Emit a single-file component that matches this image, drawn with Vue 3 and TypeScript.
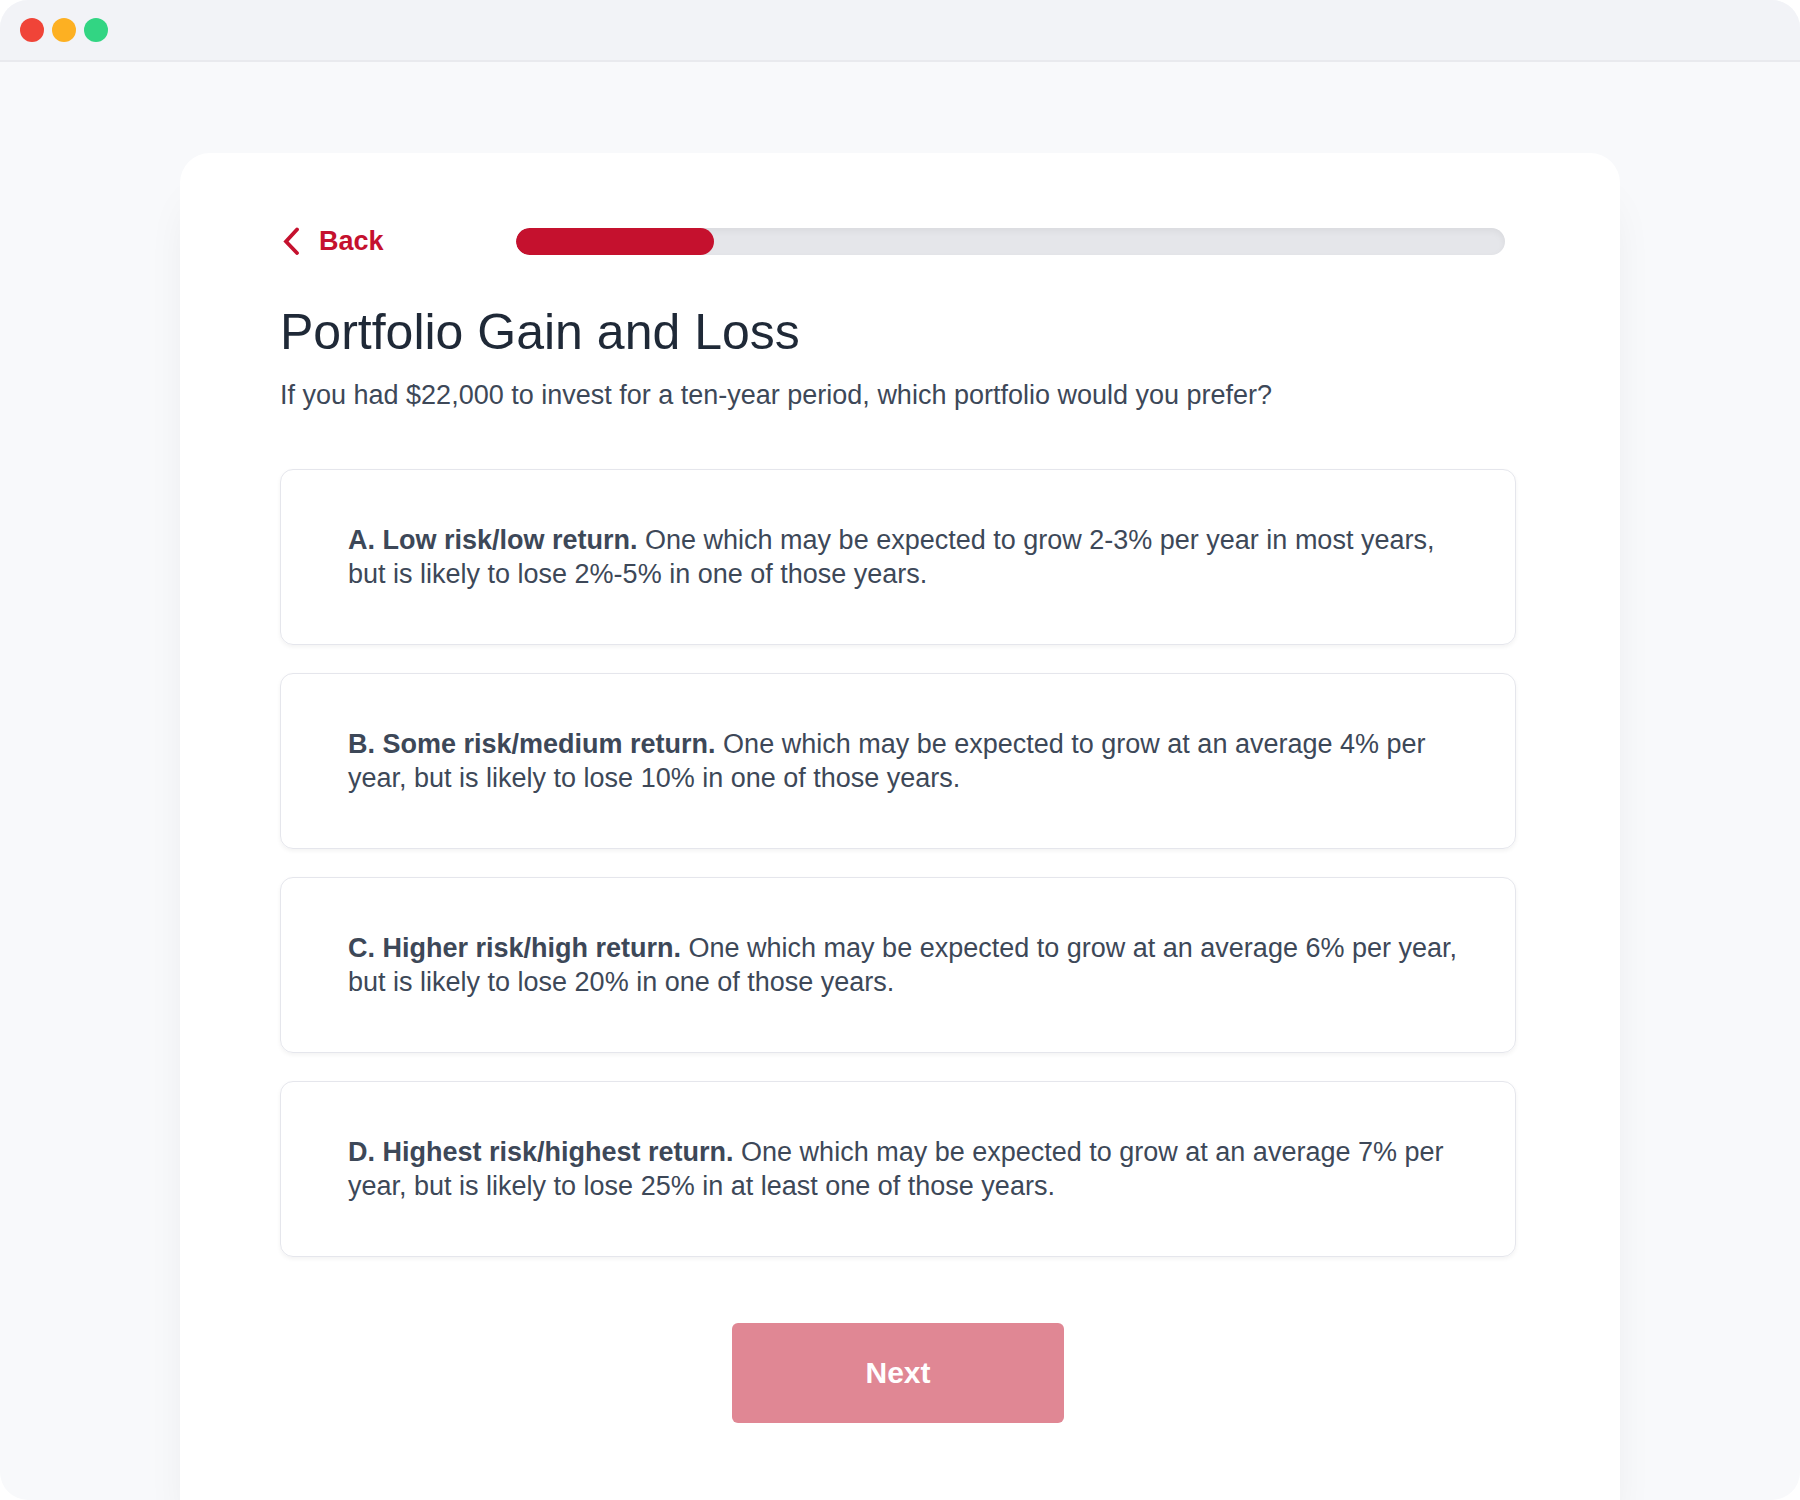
<script setup lang="ts">
import { ref } from 'vue'

interface Option {
  id: string
  title: string
  text: string
}

const progress = ref<number>(20)
const selected = ref<string>('')

const options: Option[] = [
  {
    id: 'a',
    title: 'A. Low risk/low return.',
    text: 'One which may be expected to grow 2-3% per year in most years, but is likely to lose 2%-5% in one of those years.',
  },
  {
    id: 'b',
    title: 'B. Some risk/medium return.',
    text: 'One which may be expected to grow at an average 4% per year, but is likely to lose 10% in one of those years.',
  },
  {
    id: 'c',
    title: 'C. Higher risk/high return.',
    text: 'One which may be expected to grow at an average 6% per year, but is likely to lose 20% in one of those years.',
  },
  {
    id: 'd',
    title: 'D. Highest risk/highest return.',
    text: 'One which may be expected to grow at an average 7% per year, but is likely to lose 25% in at least one of those years.',
  },
]
</script>

<template>
  <div class="window">
    <header class="titlebar">
      <span class="dot dot-close"></span>
      <span class="dot dot-minimise"></span>
      <span class="dot dot-zoom"></span>
    </header>
    <main class="stage">
      <form class="panel" @submit.prevent>
        <div class="nav">
          <button type="button" class="back">
            <svg class="chevron" width="18" height="28" viewBox="0 0 18 28" aria-hidden="true">
              <path d="M15 2.500 4 14.500 15 26" fill="none" stroke="currentColor" stroke-width="3.800" stroke-linecap="round" />
            </svg>
            Back
          </button>
          <div
            class="progress"
            role="progressbar"
            aria-label="Progress"
            :aria-valuenow="progress"
            aria-valuemin="0"
            aria-valuemax="100"
          >
            <div class="progress-fill" :style="{ width: progress + '%' }"></div>
          </div>
        </div>
        <h1 id="question">Portfolio Gain and Loss</h1>
        <p class="lead">If you had $22,000 to invest for a ten-year period, which portfolio would you prefer?</p>
        <div class="options" role="radiogroup" aria-labelledby="question">
          <label v-for="option in options" :key="option.id" class="option" :for="'option-' + option.id">
            <input :id="'option-' + option.id" v-model="selected" type="radio" name="portfolio" :value="option.id" />
            <strong>{{ option.title }}</strong> {{ option.text }}
          </label>
        </div>
        <button type="submit" class="next" :class="{ ready: selected }">Next</button>
      </form>
    </main>
  </div>
</template>

<style>
body {
  margin: 0;
  background: #fff;
}
</style>

<style scoped>
.window {
  box-sizing: border-box;
  display: flex;
  flex-direction: column;
  min-height: 100vh;
  overflow: hidden;
  border-radius: 28px;
  background: #f8f9fb;
  color: #3d4858;
  font-family: "Liberation Sans", Arial, sans-serif;
  font-size: 27px;
  line-height: 34px;
}

.titlebar {
  display: flex;
  align-items: center;
  gap: 8px;
  height: 60px;
  padding: 0 20px;
  border-bottom: 2px solid #e9eaee;
  background: #f2f3f7;
}

.dot {
  width: 24px;
  height: 24px;
  border-radius: 50%;
}

.dot-close {
  background: #f04438;
}

.dot-minimise {
  background: #fdb022;
}

.dot-zoom {
  background: #32d583;
}

.stage {
  display: flex;
  flex: 1;
  flex-direction: column;
  padding: 91px 10% 0;
}

.panel {
  display: flex;
  flex: 1;
  flex-direction: column;
  padding: 71px 104px 60px 100px;
  border-radius: 30px 30px 0 0;
  background: #fff;
  box-shadow: 0 40px 48px -16px rgba(0, 0, 0, 0.1);
}

.nav {
  display: flex;
  align-items: center;
  justify-content: space-between;
}

.back {
  display: flex;
  align-items: center;
  gap: 19px;
  padding: 0 0 0 2px;
  border: 0;
  background: none;
  color: #c5112e;
  font: inherit;
  font-weight: 700;
  cursor: pointer;
}

.progress {
  width: 80%;
  height: 27px;
  margin-right: 11px;
  overflow: hidden;
  border-radius: 14px;
  background: #e5e6ea;
  box-shadow: inset 0 3px 7px rgba(0, 0, 0, 0.05);
}

.progress-fill {
  height: 100%;
  border-radius: 14px;
  background: #c5112e;
}

h1 {
  margin: 44px 0 16px;
  color: #1f2937;
  font-size: 50px;
  font-weight: 400;
  line-height: 60px;
}

.lead {
  margin: 0;
}

.options {
  display: flex;
  flex-direction: column;
  gap: 28px;
  margin: 57px 0 66px;
}

.option {
  position: relative;
  padding: 53px 52px 53px 67px;
  border: 1px solid #e5e6ec;
  border-radius: 13px;
  box-shadow: 0 2px 4px rgba(0, 0, 0, 0.05);
  cursor: pointer;
}

.option input {
  position: absolute;
  inset: 0;
  width: 100%;
  height: 100%;
  margin: 0;
  opacity: 0;
  cursor: pointer;
}

.option:has(input:checked) {
  border-color: #c5112e;
}

.next {
  align-self: center;
  width: 332px;
  height: 100px;
  border: 0;
  border-radius: 6px;
  background: #e08794;
  color: #fff;
  font: inherit;
  font-size: 30px;
  font-weight: 700;
  cursor: pointer;
}

.next.ready {
  background: #c5112e;
}
</style>
